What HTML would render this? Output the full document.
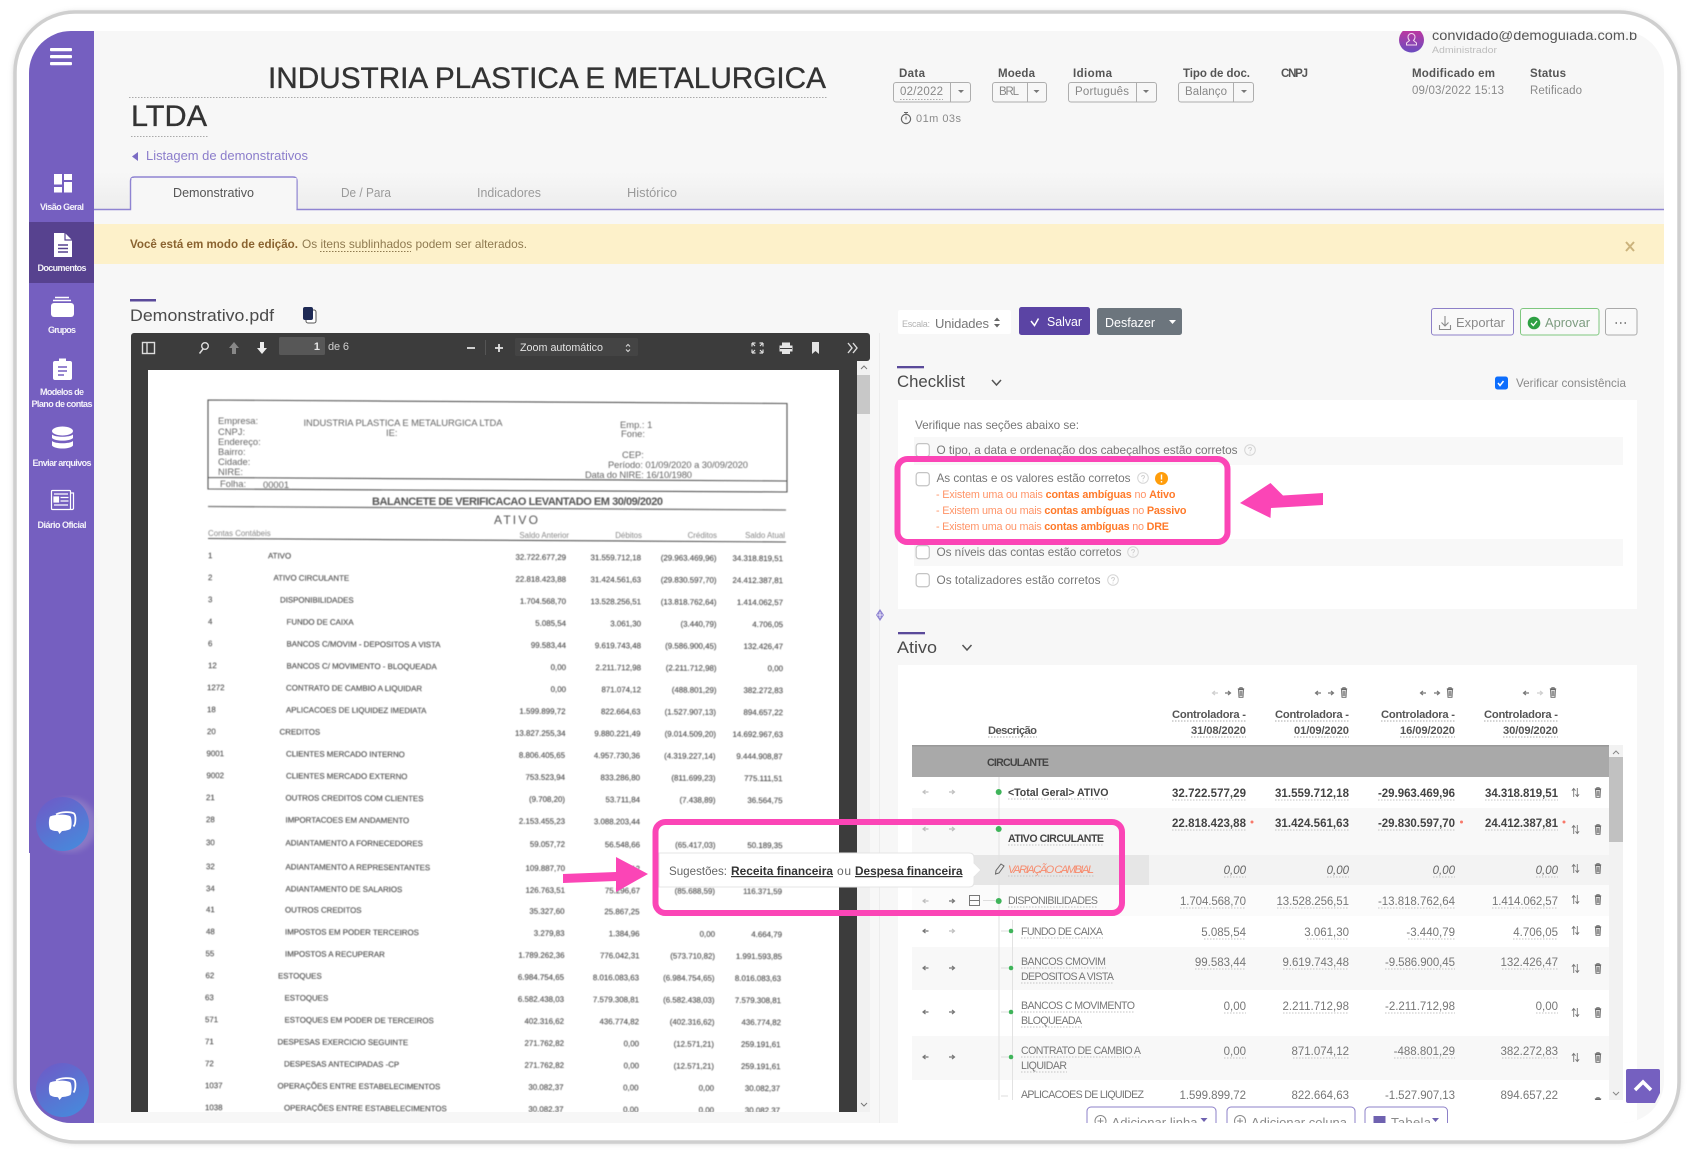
<!DOCTYPE html>
<html lang="pt"><head><meta charset="utf-8"><title>Demonstrativo</title>
<style>
html,body{margin:0;padding:0;background:#fff;width:1700px;height:1166px;overflow:hidden}
svg{display:block;filter:blur(.35px)}
text{font-family:"Liberation Sans",sans-serif;white-space:pre}
.s{fill:#fff;font-size:9px;font-weight:700;text-anchor:middle;opacity:.92}
.lb{font-size:11.5px;font-weight:700;fill:#555}
.v{font-size:11.5px;fill:#8a8a8a}
.sel{font-size:11.5px;fill:#888}
.c{font-size:11.8px;fill:#777}
.o{font-size:10.8px;fill:#ff9468}
.ob{font-weight:700;fill:#ff7a2a}
.h{font-size:11.2px;font-weight:700;fill:#555;text-anchor:end}
.nb{font-size:11.5px;font-weight:700;fill:#444;text-anchor:end}
.n{font-size:11.5px;fill:#777;text-anchor:end}
.ni{font-size:11.5px;fill:#666;font-style:italic;text-anchor:end}
.d{font-size:10.6px;fill:#777}
.db{font-size:10.6px;font-weight:700;fill:#444}
.p{font-size:7.9px;fill:#444;stroke:#666;stroke-width:.15}
.pn{font-size:7.9px;fill:#444;stroke:#666;stroke-width:.15;text-anchor:end}
.ph{font-size:9.4px;fill:#666}
.dot{stroke:#aaa;stroke-width:1;stroke-dasharray:1.5 1.5;fill:none}
.pk{fill:none;stroke:#fb45b6;stroke-width:6}
.btn{font-size:13px;fill:#8a8a8a}
</style></head><body>
<svg width="1700" height="1166" viewBox="0 0 1700 1166" xmlns="http://www.w3.org/2000/svg">
<defs>
<filter id="bl" x="-5%" y="-5%" width="110%" height="110%"><feGaussianBlur stdDeviation="3"/></filter>
<filter id="pb"><feGaussianBlur stdDeviation=".4"/></filter>
<clipPath id="scr"><rect x="29" y="31" width="1635" height="1092" rx="42"/></clipPath>
<clipPath id="em"><rect x="1400" y="31" width="237" height="40"/></clipPath>
<clipPath id="tb"><rect x="912" y="777" width="697" height="323"/></clipPath>
<clipPath id="bb"><rect x="1080" y="1100" width="400" height="23"/></clipPath>
<linearGradient id="ch" x1="0" y1="0" x2=".6" y2="1"><stop offset="0" stop-color="#7058c6"/><stop offset="1" stop-color="#4a86da"/></linearGradient>
<linearGradient id="av" x1="0" y1="0" x2="0" y2="1"><stop offset="0" stop-color="#c8359c"/><stop offset="1" stop-color="#6a4cc0"/></linearGradient>
<linearGradient id="tg" x1="0" y1="0" x2="0" y2="1"><stop offset="0" stop-color="#f7f7f7"/><stop offset="1" stop-color="#ededed"/></linearGradient>
<symbol id="tr" viewBox="0 0 10 14" overflow="visible"><path d="M1 2.500h8M3.500 2.500V1h3v1.500M2 3.500h6l-.5 9.500h-5zM4 5v6.500M6 5v6.500" fill="none" stroke="#666" stroke-width="1.200"/></symbol>
<symbol id="so" viewBox="0 0 10 12" overflow="visible"><path d="M3 11V2M1 4l2-2.500L5 4M7 1v9M5 8l2 2.500L9 8" fill="none" stroke="#777" stroke-width="1"/></symbol>
<symbol id="ra" viewBox="0 0 8 8" overflow="visible"><path d="M1 4h5M4 2l2.500 2L4 6" fill="none" stroke="#777" stroke-width="1.200"/></symbol>
<symbol id="la" viewBox="0 0 8 8" overflow="visible"><path d="M7 4H2M4 2L1.500 4 4 6" fill="none" stroke="#777" stroke-width="1.200"/></symbol>
<symbol id="cb" viewBox="0 0 16 16" overflow="visible"><rect x=".7" y=".7" width="14" height="14" rx="3" fill="#fff" stroke="#c4c4c4" stroke-width="1.300"/></symbol>
<symbol id="hp" viewBox="0 0 12 12" overflow="visible"><circle cx="6" cy="6" r="5.300" fill="none" stroke="#d5d5d5"/><path d="M4.500 4.800C4.600 3 7.500 3 7.500 4.800 7.500 6 6 6 6 7.300M6 8.500v1" fill="none" stroke="#d0d0d0"/></symbol>
<symbol id="bub" viewBox="0 0 30 26" overflow="visible"><path d="M9 3.500C14 .5 24 .5 27 2.500c2 2 2 10-.5 13" fill="none" stroke="#fff" stroke-width="1.800"/><path d="M3 5.500C9 3 20 3 23.500 5.500c1.500 3 1.500 10 0 12.500-3 1.500-7 2-8.500 2L12.500 23 11 20.200c-2.500 0-6-.5-8-2.200-1.500-3-1.500-9.500 0-12.500z" fill="#fff"/></symbol>
</defs>

<!-- frame -->
<rect x="14" y="12" width="1666" height="1131" rx="62" fill="#bbb" filter="url(#bl)" opacity=".7"/>
<rect x="15" y="12" width="1664" height="1130" rx="60" fill="#fff" stroke="#cfcfcf" stroke-width="3.500"/>

<g clip-path="url(#scr)">
<rect x="29" y="31" width="1635" height="1092" fill="#f7f7f7"/>
<!-- sidebar -->
<rect x="29" y="31" width="65" height="822" fill="#755fc0"/>
<rect x="30" y="853" width="64" height="270" fill="#755fc0"/>
<rect x="29" y="222" width="65" height="61" fill="#57428f"/>
<g fill="#fff">
<rect x="50" y="48" width="22" height="3.200" rx="1"/><rect x="50" y="55" width="22" height="3.200" rx="1"/><rect x="50" y="62" width="22" height="3.200" rx="1"/>
<rect x="54" y="174" width="8" height="10.500"/><rect x="64" y="174" width="8" height="6"/><rect x="64" y="182" width="8" height="10.500"/><rect x="54" y="187" width="8" height="5.500"/>
<path d="M54 233h11l7 7v17H54z"/>
<path d="M55 297.500h14M53 300.500h18" stroke="#fff" stroke-width="1.500" fill="none"/>
<rect x="51" y="303" width="23" height="14" rx="3"/>
<path d="M55 361h4v-2.500h7V361h4q2 0 2 2v15q0 2-2 2H55q-2 0-2-2v-15q0-2 2-2z"/>
<ellipse cx="62.500" cy="431" rx="10.500" ry="4.500"/>
<path d="M52 434.500c3 3 18 3 21 0V438c-3 3.500-18 3.500-21 0zM52 441c3 3 18 3 21 0v4.500c-3 4-18 4-21 0z"/>
</g>
<path d="M65 233v7h7" fill="none" stroke="#57428f" stroke-width="1.200"/>
<path d="M58 245h10M58 248.500h10M58 252h10" stroke="#57428f" stroke-width="1.500"/>
<path d="M58 367h9M58 371h9M58 375h6" stroke="#755fc0" stroke-width="1.500"/>
<g fill="none" stroke="#fff" stroke-width="1.200"><rect x="51.500" y="490.500" width="19" height="19" rx="1"/><path d="M71 493h2.500v15.500a1.500 1.500 0 0 1-1.500 1H70"/><path d="M54 494h14M60.500 497.500h8M60.500 501h8M54 505h14" /><rect x="54" y="497" width="4.500" height="5" fill="#fff"/></g>
<text class="s" x="62" y="210" textLength="44">Visão Geral</text>
<text class="s" x="62" y="271" textLength="49">Documentos</text>
<text class="s" x="62" y="333" textLength="28">Grupos</text>
<text class="s" x="62" y="395" textLength="44">Modelos de</text>
<text class="s" x="62" y="407" textLength="61">Plano de contas</text>
<text class="s" x="62" y="466" textLength="59">Enviar arquivos</text>
<text class="s" x="62" y="528" textLength="49">Diário Oficial</text>
<ellipse cx="70" cy="825" rx="27" ry="27" fill="#ddd" opacity=".2" filter="url(#bl)"/>
<ellipse cx="62.500" cy="824" rx="26.500" ry="27" fill="url(#ch)"/>
<use href="#bub" x="47" y="811" width="30" height="26"/>
<ellipse cx="62.500" cy="1090" rx="26.500" ry="27" fill="url(#ch)"/>
<use href="#bub" x="47" y="1077" width="30" height="26"/>

<!-- header -->
<text x="268" y="88" font-size="30" fill="#333" stroke="#333" stroke-width=".35" textLength="558" lengthAdjust="spacingAndGlyphs">INDUSTRIA PLASTICA E METALURGICA</text>
<path class="dot" d="M129 97.500H827"/>
<text x="131" y="126" font-size="30" fill="#333" stroke="#333" stroke-width=".35" textLength="76" lengthAdjust="spacingAndGlyphs">LTDA</text>
<path class="dot" d="M131 136.500H208"/>
<path d="M138 152v9l-6-4.500z" fill="#7b6cc4"/>
<text x="146" y="160" font-size="13" fill="#8b7dcb" textLength="162" lengthAdjust="spacingAndGlyphs">Listagem de demonstrativos</text>

<rect x="94" y="172" width="1570" height="37" fill="url(#tg)"/>
<path d="M94 209.500H130.500V181q0-4 4-4H293q4 0 4 4V209.500H1664" fill="none" stroke="#8f84d2" stroke-width="1.400"/>
<rect x="131.500" y="178" width="165" height="31.500" fill="#f7f7f7"/>
<text x="173" y="197" font-size="12.500" fill="#555" textLength="81" lengthAdjust="spacingAndGlyphs">Demonstrativo</text>
<text x="341" y="197" font-size="12.500" fill="#9a9a9a" textLength="50" lengthAdjust="spacingAndGlyphs">De / Para</text>
<text x="477" y="197" font-size="12.500" fill="#9a9a9a" textLength="64" lengthAdjust="spacingAndGlyphs">Indicadores</text>
<text x="627" y="197" font-size="12.500" fill="#9a9a9a" textLength="50" lengthAdjust="spacingAndGlyphs">Histórico</text>

<rect x="94" y="224" width="1570" height="40" fill="#fdf1ca"/>
<text x="130" y="248" font-size="12" font-weight="700" fill="#8a6330" textLength="168" lengthAdjust="spacingAndGlyphs">Você está em modo de edição.</text>
<text x="302" y="248" font-size="12" fill="#8f7a50" textLength="225" lengthAdjust="spacingAndGlyphs">Os itens sublinhados podem ser alterados.</text>
<path d="M320 251.500H411" stroke="#8f7a50" stroke-dasharray="1.500 1.500" fill="none"/>
<path d="M1626 242l8 9M1634 242l-8 9" stroke="#cbb37c" stroke-width="2"/>

<!-- top right -->
<circle cx="1411.500" cy="40" r="12.500" fill="url(#av)"/>
<path d="M1408 37a3.500 3.500 0 0 1 7 0c0 2-1 3-1.500 3.500l3 2.500v2h-10v-2l3-2.500c-.5-.5-1.500-1.500-1.500-3.500z" fill="none" stroke="#f3d7ee" stroke-width="1"/>
<g clip-path="url(#em)"><text x="1432" y="40" font-size="14" fill="#555" textLength="210" lengthAdjust="spacingAndGlyphs">convidado@demoguiada.com.br</text></g>
<text x="1432" y="53" font-size="9.500" fill="#bcbcbc" textLength="65" lengthAdjust="spacingAndGlyphs">Administrador</text>
<text class="lb" x="899" y="77" textLength="26">Data</text>
<text class="lb" x="998" y="77" textLength="37">Moeda</text>
<text class="lb" x="1073" y="77" textLength="39">Idioma</text>
<text class="lb" x="1183" y="77" textLength="67">Tipo de doc.</text>
<text class="lb" x="1281" y="77" textLength="27">CNPJ</text>
<text class="lb" x="1412" y="77" textLength="83">Modificado em</text>
<text class="lb" x="1530" y="77" textLength="36">Status</text>
<text class="v" x="1412" y="94" textLength="92">09/03/2022 15:13</text>
<text class="v" x="1530" y="94" textLength="52">Retificado</text>
<g fill="none" stroke="#aeaeae">
<rect x="893.500" y="82.500" width="77" height="19.500" rx="2.500"/><path d="M950.500 82v20"/>
<rect x="992.500" y="82.500" width="54" height="19.500" rx="2.500"/><path d="M1027.500 82v20"/>
<rect x="1068.500" y="82.500" width="88" height="19.500" rx="2.500"/><path d="M1136.500 82v20"/>
<rect x="1178.500" y="82.500" width="75" height="19.500" rx="2.500"/><path d="M1233.500 82v20"/>
</g>
<g fill="#777"><path d="M958 90h6l-3 3z"/><path d="M1033.500 90h6l-3 3z"/><path d="M1143 90h6l-3 3z"/><path d="M1241 90h6l-3 3z"/></g>
<text class="sel" x="900" y="95" textLength="43">02/2022</text>
<path class="dot" d="M900 99.500H943"/>
<text class="sel" x="999" y="95" textLength="20">BRL</text>
<text class="sel" x="1075" y="95" textLength="54">Português</text>
<text class="sel" x="1185" y="95" textLength="42">Balanço</text>
<circle cx="906" cy="119" r="4.600" fill="none" stroke="#666" stroke-width="1.200"/>
<path d="M904 112.500h4M906 113v2M906 116.500v3" stroke="#666" fill="none"/>
<text x="916" y="122" font-size="11" fill="#8a8a8a" textLength="45">01m 03s</text>

<!-- action row -->
<rect x="130" y="299" width="26" height="2.500" fill="#5a4a9a"/>
<text x="130" y="321" font-size="17" fill="#4b4b4b" textLength="144" lengthAdjust="spacingAndGlyphs">Demonstrativo.pdf</text>
<rect x="306" y="310" width="10" height="13" rx="2" fill="#fff" stroke="#555"/>
<rect x="303" y="307" width="10" height="13" rx="2" fill="#1e2a55"/>

<rect x="898" y="310" width="113" height="24" rx="2" fill="#fff"/>
<text x="902" y="327" font-size="9" fill="#b2b2b2" textLength="28">Escala:</text>
<text x="935" y="328" font-size="13" fill="#777" textLength="54">Unidades</text>
<path d="M994 321l3-3.500 3 3.500zM994 324l3 3.500 3-3.500z" fill="#666"/>
<rect x="1019" y="307" width="71" height="28" rx="2.500" fill="#5b44a4"/>
<path d="M1031 321l3.500 4.500 4-7" fill="none" stroke="#fff" stroke-width="1.500"/>
<text x="1047" y="326" font-size="13" fill="#fff" textLength="35" lengthAdjust="spacingAndGlyphs">Salvar</text>
<rect x="1097" y="308" width="85" height="27" rx="2.500" fill="#6c757d"/>
<text x="1105" y="327" font-size="13" fill="#fff" textLength="50" lengthAdjust="spacingAndGlyphs">Desfazer</text>
<path d="M1169 320h7l-3.500 4z" fill="#fff"/>
<rect x="1431.500" y="308.500" width="82" height="26.500" rx="2.500" fill="#f9f9f9" stroke="#8d80c8"/>
<path d="M1445 316v10M1441.500 322.500l3.500 3.500 3.500-3.500M1439.500 325v4.500h11V325" fill="none" stroke="#8a8a8a" stroke-width="1.100"/>
<text class="btn" x="1456" y="327" textLength="49" lengthAdjust="spacingAndGlyphs">Exportar</text>
<rect x="1520.500" y="308.500" width="78.500" height="26.500" rx="2.500" fill="#f9f9f9" stroke="#7fc77f"/>
<circle cx="1534" cy="323" r="6.300" fill="#2ea043"/><path d="M1531 323l2.300 2.500 3.700-4.500" fill="none" stroke="#fff" stroke-width="1.300"/>
<text class="btn" x="1545" y="327" textLength="45" lengthAdjust="spacingAndGlyphs" style="fill:#7d9c80">Aprovar</text>
<rect x="1605.500" y="308.500" width="31.500" height="26.500" rx="2.500" fill="#f9f9f9" stroke="#aaa"/>
<path d="M1615.500 323h1.500M1620 323h1.500M1624.500 323h1.500" stroke="#666" stroke-width="1.500"/>

<!-- checklist -->
<rect x="897" y="366" width="27" height="2.300" fill="#5a4a9a"/>
<text x="897" y="387" font-size="17" fill="#4b4b4b" textLength="68" lengthAdjust="spacingAndGlyphs">Checklist</text>
<path d="M992 380l4.500 5 4.500-5" fill="none" stroke="#555" stroke-width="1.500"/>
<rect x="1495" y="376.500" width="13" height="13" rx="2.500" fill="#0d6efd"/>
<path d="M1498 383l2 2.500 3.500-4.500" fill="none" stroke="#fff" stroke-width="1.500"/>
<text x="1516" y="387" font-size="12" fill="#8a8a8a" textLength="110" lengthAdjust="spacingAndGlyphs">Verificar consistência</text>

<rect x="898" y="400" width="739" height="209" fill="#fff"/>
<rect x="914" y="437" width="709" height="28" fill="#f8f8f8"/>
<rect x="914" y="539" width="709" height="27" fill="#f8f8f8"/>
<text class="c" x="915" y="429" textLength="164">Verifique nas seções abaixo se:</text>
<use href="#cb" x="915.500" y="443" width="15" height="15"/>
<text class="c" x="936.500" y="454" textLength="301">O tipo, a data e ordenação dos cabeçalhos estão corretos</text>
<use href="#hp" x="1244" y="444" width="12" height="12"/>
<use href="#cb" x="915.500" y="472" width="15" height="15"/>
<text class="c" x="936.500" y="482" textLength="194">As contas e os valores estão corretos</text>
<use href="#hp" x="1137" y="472" width="12" height="12"/>
<circle cx="1161.500" cy="478.500" r="6.500" fill="#ff9d0b"/><path d="M1161.500 474.500v5M1161.500 481v1.500" stroke="#fff" stroke-width="1.400"/>
<text class="o" x="936" y="498" textLength="239.500">- Existem uma ou mais <tspan class="ob">contas ambíguas</tspan> no <tspan class="ob">Ativo</tspan></text>
<text class="o" x="936" y="514" textLength="250.500">- Existem uma ou mais <tspan class="ob">contas ambíguas</tspan> no <tspan class="ob">Passivo</tspan></text>
<text class="o" x="936" y="530" textLength="233">- Existem uma ou mais <tspan class="ob">contas ambíguas</tspan> no <tspan class="ob">DRE</tspan></text>
<use href="#cb" x="915.500" y="545" width="15" height="15"/>
<text class="c" x="936.500" y="556" textLength="185">Os níveis das contas estão corretos</text>
<use href="#hp" x="1127" y="546" width="12" height="12"/>
<use href="#cb" x="915.500" y="573" width="15" height="15"/>
<text class="c" x="936.500" y="584" textLength="164">Os totalizadores estão corretos</text>
<use href="#hp" x="1107" y="574" width="12" height="12"/>
<rect class="pk" x="897.500" y="459" width="330" height="83" rx="10"/>
<path d="M1323 493l-40 2.500-12.500-12.500-30.500 20 30.500 15 .5-10 52-3z" fill="#fb45b6"/>

<path d="M879.500 333V1123" stroke="#ececec"/>
<path d="M884 615l-4-6-4 6 4 6z" fill="#8f84d2"/><path d="M877 615h6M880 612v6" stroke="#fff" stroke-width=".8"/>

<!-- ativo -->
<rect x="898" y="632" width="27" height="2.300" fill="#5a4a9a"/>
<text x="897" y="653" font-size="17" fill="#4b4b4b" textLength="40" lengthAdjust="spacingAndGlyphs">Ativo</text>
<path d="M962.500 645l4.500 5 4.500-5" fill="none" stroke="#555" stroke-width="1.500"/>
<rect x="898" y="665" width="739" height="458" fill="#fff"/>

<!-- table header -->
<g opacity=".35"><use href="#la" x="1211" y="689" width="8" height="8"/><use href="#ra" x="1536" y="689" width="8" height="8"/></g>
<use href="#ra" x="1224" y="689" width="8" height="8"/><use href="#tr" x="1237" y="686" width="8" height="13"/>
<use href="#la" x="1314" y="689" width="8" height="8"/><use href="#ra" x="1327" y="689" width="8" height="8"/><use href="#tr" x="1340" y="686" width="8" height="13"/>
<use href="#la" x="1419" y="689" width="8" height="8"/><use href="#ra" x="1433" y="689" width="8" height="8"/><use href="#tr" x="1446" y="686" width="8" height="13"/>
<use href="#la" x="1522" y="689" width="8" height="8"/><use href="#tr" x="1549" y="686" width="8" height="13"/>
<text class="h" x="1246" y="718" textLength="74">Controladora -</text><text class="h" x="1246" y="734" textLength="55">31/08/2020</text>
<text class="h" x="1349" y="718" textLength="74">Controladora -</text><text class="h" x="1349" y="734" textLength="55">01/09/2020</text>
<text class="h" x="1455" y="718" textLength="74">Controladora -</text><text class="h" x="1455" y="734" textLength="55">16/09/2020</text>
<text class="h" x="1558" y="718" textLength="74">Controladora -</text><text class="h" x="1558" y="734" textLength="55">30/09/2020</text>
<text class="h" x="1037" y="734" textLength="49">Descrição</text>
<path class="dot" d="M1172 721H1246M1191 737H1246M1275 721H1349M1294 737H1349M1381 721H1455M1400 737H1455M1484 721H1558M1503 737H1558M988 737H1037"/>
<rect x="912" y="745" width="697" height="32" fill="#a9a9a9"/>
<rect x="912" y="745" width="697" height="1.500" fill="#999"/>
<text class="db" x="987" y="766" textLength="62">CIRCULANTE</text>
<rect x="1609" y="745" width="14" height="355" fill="#f2f2f2"/>
<rect x="1609" y="757" width="14" height="85" fill="#c1c1c1"/>
<path d="M1613 754l3-3 3 3M1613 1092l3 3 3-3" fill="none" stroke="#888"/>

<g clip-path="url(#tb)">
<rect x="912" y="808" width="697" height="47" fill="#f8f8f8"/>
<rect x="912" y="855" width="697" height="30" fill="#f3f3f3"/>
<rect x="912" y="855" width="237" height="30" fill="#e6e6e6"/>
<rect x="912" y="885" width="697" height="31" fill="#fbfbfb"/>
<rect x="912" y="947" width="697" height="43" fill="#f8f8f8"/>
<rect x="912" y="1036" width="697" height="44" fill="#f8f8f8"/>
<path d="M999 777V1100" stroke="#e2e2e2"/>
<path d="M1012.500 920V1100" stroke="#e2e2e2"/>
<path d="M983 900.500h12M1001 931h7M1001 968h7M1001 1012h7M1001 1057h7M1001 1096h7" stroke="#ddd"/>
<g fill="#3fb45a"><circle cx="998.700" cy="792" r="3"/><circle cx="998.700" cy="829" r="3"/><circle cx="998.700" cy="901" r="3"/><circle cx="1011" cy="931" r="2.300"/><circle cx="1011" cy="968" r="2.300"/><circle cx="1011" cy="1012" r="2.300"/><circle cx="1011" cy="1057" r="2.300"/></g>
<text class="db" x="1008" y="796" textLength="100.500">&lt;Total Geral&gt; ATIVO</text>
<text class="nb" x="1246" y="797" textLength="74">32.722.577,29</text><text class="nb" x="1349" y="797" textLength="74">31.559.712,18</text><text class="nb" x="1455" y="797" textLength="77">-29.963.469,96</text><text class="nb" x="1558" y="797" textLength="73">34.318.819,51</text>
<text class="db" x="1008" y="842" textLength="96">ATIVO CIRCULANTE</text>
<text class="nb" x="1246" y="827" textLength="74">22.818.423,88</text><text class="nb" x="1349" y="827" textLength="74">31.424.561,63</text><text class="nb" x="1455" y="827" textLength="77">-29.830.597,70</text><text class="nb" x="1558" y="827" textLength="73">24.412.387,81</text>
<g fill="#f8786a"><circle cx="1252" cy="822" r="1.500"/><circle cx="1461.500" cy="822" r="1.500"/><circle cx="1564" cy="822" r="1.500"/></g>
<path d="M1001 864l3 2-5 7-3.500 1 .5-3.500z" fill="none" stroke="#666"/>
<text x="1008" y="873" font-size="11" font-style="italic" fill="#f78a6c" textLength="86">VARIAÇÃO CAMBIAL</text>
<text class="ni" x="1246" y="874">0,00</text><text class="ni" x="1349" y="874">0,00</text><text class="ni" x="1455" y="874">0,00</text><text class="ni" x="1558" y="874">0,00</text>
<rect x="969.500" y="895.500" width="10" height="10" fill="none" stroke="#777"/><path d="M970 900.500h9" stroke="#777"/>
<text class="d" x="1008" y="904" textLength="90">DISPONIBILIDADES</text>
<text class="n" x="1246" y="905" textLength="66">1.704.568,70</text><text class="n" x="1349" y="905" textLength="72.500">13.528.256,51</text><text class="n" x="1455" y="905" textLength="77">-13.818.762,64</text><text class="n" x="1558" y="905" textLength="66">1.414.062,57</text>
<text class="d" x="1021" y="935" textLength="82">FUNDO DE CAIXA</text>
<text class="n" x="1246" y="936">5.085,54</text><text class="n" x="1349" y="936">3.061,30</text><text class="n" x="1455" y="936">-3.440,79</text><text class="n" x="1558" y="936">4.706,05</text>
<text class="d" x="1021" y="965" textLength="85">BANCOS CMOVIM</text><text class="d" x="1021" y="980" textLength="93">DEPOSITOS A VISTA</text>
<text class="n" x="1246" y="966">99.583,44</text><text class="n" x="1349" y="966" textLength="66.500">9.619.743,48</text><text class="n" x="1455" y="966" textLength="70">-9.586.900,45</text><text class="n" x="1558" y="966">132.426,47</text>
<text class="d" x="1021" y="1009" textLength="114">BANCOS C MOVIMENTO</text><text class="d" x="1021" y="1024" textLength="61">BLOQUEADA</text>
<text class="n" x="1246" y="1010">0,00</text><text class="n" x="1349" y="1010" textLength="66.500">2.211.712,98</text><text class="n" x="1455" y="1010" textLength="70">-2.211.712,98</text><text class="n" x="1558" y="1010">0,00</text>
<text class="d" x="1021" y="1054" textLength="120">CONTRATO DE CAMBIO A</text><text class="d" x="1021" y="1069" textLength="46">LIQUIDAR</text>
<text class="n" x="1246" y="1055">0,00</text><text class="n" x="1349" y="1055">871.074,12</text><text class="n" x="1455" y="1055">-488.801,29</text><text class="n" x="1558" y="1055">382.272,83</text>
<text class="d" x="1021" y="1098" textLength="123">APLICACOES DE LIQUIDEZ</text>
<text class="n" x="1246" y="1099" textLength="66.500">1.599.899,72</text><text class="n" x="1349" y="1099">822.664,63</text><text class="n" x="1455" y="1099" textLength="70">-1.527.907,13</text><text class="n" x="1558" y="1099">894.657,22</text>
<!-- dotted underlines -->
<path class="dot" d="M1008 799H1108M1172 800H1246M1275 800H1349M1378 800H1455M1485 800H1558M1008 845H1104M1172 830H1246M1275 830H1349M1378 830H1455M1485 830H1558M1008 876H1094M1224 877H1246M1327 877H1349M1433 877H1455M1536 877H1558M1008 907H1098M1180 908H1246M1277 908H1349M1378 908H1455M1492 908H1558M1021 938H1103M1204 939H1246M1307 939H1349M1408 939H1455M1513 939H1558M1021 968H1106M1021 983H1114M1195 969H1246M1283 969H1349M1385 969H1455M1502 969H1558M1021 1012H1135M1021 1027H1082M1224 1013H1246M1283 1013H1349M1385 1013H1455M1536 1013H1558M1021 1057H1141M1021 1072H1067M1224 1058H1246M1293 1058H1349M1394 1058H1455M1502 1058H1558" style="stroke:#c4c4c4"/>
<!-- row controls -->
<g opacity=".45"><use href="#la" x="921.500" y="788" width="8" height="8"/><use href="#ra" x="948" y="788" width="8" height="8"/><use href="#la" x="921.500" y="825" width="8" height="8"/><use href="#ra" x="948" y="825" width="8" height="8"/><use href="#la" x="921.500" y="897" width="8" height="8"/><use href="#ra" x="948" y="927" width="8" height="8"/></g>
<use href="#ra" x="948" y="897" width="8" height="8"/>
<use href="#la" x="921.500" y="927" width="8" height="8"/>
<use href="#la" x="921.500" y="964" width="8" height="8"/><use href="#ra" x="948" y="964" width="8" height="8"/>
<use href="#la" x="921.500" y="1008" width="8" height="8"/><use href="#ra" x="948" y="1008" width="8" height="8"/>
<use href="#la" x="921.500" y="1053" width="8" height="8"/><use href="#ra" x="948" y="1053" width="8" height="8"/>
<use href="#so" x="1571" y="787" width="9" height="11"/><use href="#tr" x="1594" y="786" width="8" height="13"/>
<use href="#so" x="1571" y="824" width="9" height="11"/><use href="#tr" x="1594" y="823" width="8" height="13"/>
<use href="#so" x="1571" y="863" width="9" height="11"/><use href="#tr" x="1594" y="862" width="8" height="13"/>
<use href="#so" x="1571" y="894" width="9" height="11"/><use href="#tr" x="1594" y="893" width="8" height="13"/>
<use href="#so" x="1571" y="925" width="9" height="11"/><use href="#tr" x="1594" y="924" width="8" height="13"/>
<use href="#so" x="1571" y="963" width="9" height="11"/><use href="#tr" x="1594" y="962" width="8" height="13"/>
<use href="#so" x="1571" y="1007" width="9" height="11"/><use href="#tr" x="1594" y="1006" width="8" height="13"/>
<use href="#so" x="1571" y="1052" width="9" height="11"/><use href="#tr" x="1594" y="1051" width="8" height="13"/>
<use href="#tr" x="1594" y="1096" width="8" height="13"/>
</g>

<!-- bottom buttons -->
<g clip-path="url(#bb)">
<rect x="1087" y="1107" width="129" height="30" rx="4" fill="#fff" stroke="#8d80c8"/>
<rect x="1227" y="1107" width="128" height="30" rx="4" fill="#fff" stroke="#8d80c8"/>
<rect x="1365" y="1107" width="82.500" height="30" rx="4" fill="#fff" stroke="#8d80c8"/>
<circle cx="1100.500" cy="1121" r="5.500" fill="none" stroke="#8a8a8a"/><path d="M1100.500 1118v6M1097.500 1121h6" stroke="#8a8a8a"/>
<circle cx="1240" cy="1121" r="5.500" fill="none" stroke="#8a8a8a"/><path d="M1240 1118v6M1237 1121h6" stroke="#8a8a8a"/>
<rect x="1373.500" y="1116" width="12" height="10" fill="#6f62b0"/>
<text class="btn" x="1111.500" y="1127" textLength="86">Adicionar linha</text>
<path d="M1200.500 1118h7l-3.500 4z" fill="#6f62b0"/>
<text class="btn" x="1251" y="1127" textLength="96">Adicionar coluna</text>
<text class="btn" x="1391" y="1127" textLength="40">Tabela</text>
<path d="M1432 1118h7l-3.500 4z" fill="#6f62b0"/>
</g>

<!-- pdf viewer -->
<rect x="131" y="333" width="739" height="28" rx="3" fill="#3c3c3c"/>
<rect x="131" y="355" width="726" height="757" fill="#3c3c3c"/>
<rect x="857" y="361" width="13" height="751" fill="#f1f1f1"/>
<rect x="857" y="375" width="13" height="39" fill="#c8c8c8"/>
<path d="M861 369l3-3 3 3M861 1103l3 3 3-3" fill="none" stroke="#777"/>
<rect x="148" y="370" width="691" height="750" fill="#fff"/>
<rect x="142.500" y="342.500" width="12" height="11" fill="none" stroke="#ddd" stroke-width="1.400"/><path d="M147 343v10" stroke="#ddd" stroke-width="1.400"/>
<circle cx="205" cy="346" r="3.300" fill="none" stroke="#ddd" stroke-width="1.400"/><path d="M203 349l-3.500 4.500" stroke="#ddd" stroke-width="1.500"/>
<path d="M234 342l5 6h-3v6h-4v-6h-3z" fill="#888"/>
<path d="M262 354l5-6h-3v-6h-4v6h-3z" fill="#eee"/>
<rect x="279" y="337" width="46" height="18" rx="1.500" fill="#575757"/>
<text x="320" y="350" font-size="11" font-weight="700" fill="#e6e6e6" text-anchor="end">1</text>
<text x="328" y="350" font-size="11" fill="#cfcfcf" textLength="21">de 6</text>
<path d="M467 348h8M495 348h8M499 344v8" stroke="#e4e4e4" stroke-width="1.800"/>
<path d="M485.500 340v15" stroke="#555"/>
<rect x="515" y="338" width="123" height="18" rx="1.500" fill="#444"/>
<text x="520" y="351" font-size="11" fill="#e4e4e4" textLength="83" lengthAdjust="spacingAndGlyphs">Zoom automático</text>
<path d="M626 346.500l2-2 2 2M626 349.500l2 2 2-2" stroke="#ddd" fill="none"/>
<path d="M752 343h3.500M752 343v3.500M763 343h-3.500M763 343v3.500M752 353v-3.500M752 353h3.500M763 353h-3.500M763 353v-3.500M752 343l3 3M763 343l-3 3M752 353l3-3M763 353l-3-3" stroke="#ddd" stroke-width="1.200" fill="none"/>
<path d="M782 342.500h8v3h2.500v6h-2.500v2.500h-8v-2.500h-2.500v-6h2.500z" fill="#e4e4e4"/><path d="M780 348.500h12" stroke="#3c3c3c"/>
<path d="M812 342h7v12l-3.500-3-3.500 3z" fill="#e4e4e4"/>
<path d="M848 343l4 5-4 5M853 343l4 5-4 5" fill="none" stroke="#ddd" stroke-width="1.400"/>

<!-- pdf page -->
<g filter="url(#pb)">
<path d="M208 400L787 403.500V492L208 489zM208 477.500L787 481" fill="none" stroke="#555" stroke-width="1.100"/>
<path d="M208 506.500L786 510" fill="none" stroke="#555" stroke-width="1.300" opacity=".8"/>
<path d="M208 538.500L786 542" fill="none" stroke="#555" stroke-width="1.100"/>
<text class="ph" x="218" y="424">Empresa:</text><text class="ph" x="218" y="435">CNPJ:</text><text class="ph" x="218" y="445">Endereço:</text><text class="ph" x="218" y="455">Bairro:</text><text class="ph" x="218" y="465">Cidade:</text><text class="ph" x="218" y="475">NIRE:</text>
<text class="ph" x="303.500" y="426" textLength="199">INDUSTRIA PLASTICA E METALURGICA LTDA</text><text class="ph" x="386" y="436">IE:</text>
<text class="ph" x="620" y="428">Emp.: 1</text><text class="ph" x="621" y="437">Fone:</text><text class="ph" x="622" y="458">CEP:</text>
<text class="ph" x="608" y="468" textLength="140">Período: 01/09/2020 a 30/09/2020</text><text class="ph" x="585" y="478" textLength="107">Data do NIRE: 16/10/1980</text>
<text class="ph" x="220" y="487">Folha:</text><text class="ph" x="263" y="488">00001</text>
<text x="372" y="505" font-size="11" font-weight="700" fill="#555" textLength="291">BALANCETE DE VERIFICACAO LEVANTADO EM 30/09/2020</text>
<text x="516" y="524" font-size="12" fill="#555" text-anchor="middle" textLength="44">A T I V O</text>
<text class="p" x="208" y="536" style="fill:#888;stroke:none">Contas Contábeis</text>
<text class="pn" x="569" y="538" style="fill:#888;stroke:none">Saldo Anterior</text><text class="pn" x="642" y="538" style="fill:#888;stroke:none">Débitos</text><text class="pn" x="717" y="538" style="fill:#888;stroke:none">Créditos</text><text class="pn" x="785" y="538" style="fill:#888;stroke:none">Saldo Atual</text>

<g transform="translate(0 -1) skewY(.3)">
<g transform="translate(0 558)"><text class="p" x="208">1</text><text class="p" x="268">ATIVO</text><text class="pn" x="566">32.722.677,29</text><text class="pn" x="641">31.559.712,18</text><text class="pn" x="716.500">(29.963.469,96)</text><text class="pn" x="783">34.318.819,51</text></g>
<g transform="translate(0 580)"><text class="p" x="208">2</text><text class="p" x="273.500">ATIVO CIRCULANTE</text><text class="pn" x="566">22.818.423,88</text><text class="pn" x="641">31.424.561,63</text><text class="pn" x="716.500">(29.830.597,70)</text><text class="pn" x="783">24.412.387,81</text></g>
<g transform="translate(0 602)"><text class="p" x="208">3</text><text class="p" x="280">DISPONIBILIDADES</text><text class="pn" x="566">1.704.568,70</text><text class="pn" x="641">13.528.256,51</text><text class="pn" x="716.500">(13.818.762,64)</text><text class="pn" x="783">1.414.062,57</text></g>
<g transform="translate(0 624)"><text class="p" x="208">4</text><text class="p" x="286.500">FUNDO DE CAIXA</text><text class="pn" x="566">5.085,54</text><text class="pn" x="641">3.061,30</text><text class="pn" x="716.500">(3.440,79)</text><text class="pn" x="783">4.706,05</text></g>
<g transform="translate(0 646)"><text class="p" x="208">6</text><text class="p" x="286.500">BANCOS C/MOVIM - DEPOSITOS A VISTA</text><text class="pn" x="566">99.583,44</text><text class="pn" x="641">9.619.743,48</text><text class="pn" x="716.500">(9.586.900,45)</text><text class="pn" x="783">132.426,47</text></g>
<g transform="translate(0 668)"><text class="p" x="208">12</text><text class="p" x="286.500">BANCOS C/ MOVIMENTO - BLOQUEADA</text><text class="pn" x="566">0,00</text><text class="pn" x="641">2.211.712,98</text><text class="pn" x="716.500">(2.211.712,98)</text><text class="pn" x="783">0,00</text></g>
<g transform="translate(0 690)"><text class="p" x="207">1272</text><text class="p" x="286">CONTRATO DE CAMBIO A LIQUIDAR</text><text class="pn" x="566">0,00</text><text class="pn" x="641">871.074,12</text><text class="pn" x="716.500">(488.801,29)</text><text class="pn" x="783">382.272,83</text></g>
<g transform="translate(0 712)"><text class="p" x="207">18</text><text class="p" x="286">APLICACOES DE LIQUIDEZ IMEDIATA</text><text class="pn" x="565.500">1.599.899,72</text><text class="pn" x="640.500">822.664,63</text><text class="pn" x="716">(1.527.907,13)</text><text class="pn" x="783">894.657,22</text></g>
<g transform="translate(0 734)"><text class="p" x="207">20</text><text class="p" x="279.500">CREDITOS</text><text class="pn" x="565.500">13.827.255,34</text><text class="pn" x="640.500">9.880.221,49</text><text class="pn" x="716">(9.014.509,20)</text><text class="pn" x="783">14.692.967,63</text></g>
<g transform="translate(0 756)"><text class="p" x="206.500">9001</text><text class="p" x="286">CLIENTES MERCADO INTERNO</text><text class="pn" x="565">8.806.405,65</text><text class="pn" x="640">4.957.730,36</text><text class="pn" x="715.500">(4.319.227,14)</text><text class="pn" x="782.500">9.444.908,87</text></g>
<g transform="translate(0 778)"><text class="p" x="206.500">9002</text><text class="p" x="286">CLIENTES MERCADO EXTERNO</text><text class="pn" x="565">753.523,94</text><text class="pn" x="640">833.286,80</text><text class="pn" x="715.500">(811.699,23)</text><text class="pn" x="782.500">775.111,51</text></g>
<g transform="translate(0 800)"><text class="p" x="206">21</text><text class="p" x="285.500">OUTROS CREDITOS COM CLIENTES</text><text class="pn" x="565">(9.708,20)</text><text class="pn" x="640">53.711,84</text><text class="pn" x="715.500">(7.438,89)</text><text class="pn" x="782.500">36.564,75</text></g>
<g transform="translate(0 822)"><text class="p" x="206">28</text><text class="p" x="285.500">IMPORTACOES EM ANDAMENTO</text><text class="pn" x="565">2.153.455,23</text><text class="pn" x="640">3.088.203,44</text></g>
<g transform="translate(0 845)"><text class="p" x="206">30</text><text class="p" x="285.500">ADIANTAMENTO A FORNECEDORES</text><text class="pn" x="565">59.057,72</text><text class="pn" x="640">56.548,66</text><text class="pn" x="715.500">(65.417,03)</text><text class="pn" x="782.500">50.189,35</text></g>
<g transform="translate(0 869)"><text class="p" x="206">32</text><text class="p" x="285.500">ADIANTAMENTO A REPRESENTANTES</text><text class="pn" x="565">109.887,70</text><text class="pn" x="640">12</text></g>
<g transform="translate(0 891)"><text class="p" x="206">34</text><text class="p" x="285.500">ADIANTAMENTO DE SALARIOS</text><text class="pn" x="565">126.763,51</text><text class="pn" x="640">75.296,67</text><text class="pn" x="715">(85.688,59)</text><text class="pn" x="782">116.371,59</text></g>
<g transform="translate(0 912)"><text class="p" x="206">41</text><text class="p" x="285">OUTROS CREDITOS</text><text class="pn" x="564.500">35.327,60</text><text class="pn" x="639.500">25.867,25</text></g>
<g transform="translate(0 934)"><text class="p" x="206">48</text><text class="p" x="285">IMPOSTOS EM PODER TERCEIROS</text><text class="pn" x="564.500">3.279,83</text><text class="pn" x="639.500">1.384,96</text><text class="pn" x="715">0,00</text><text class="pn" x="782">4.664,79</text></g>
<g transform="translate(0 956)"><text class="p" x="205.500">55</text><text class="p" x="285">IMPOSTOS A RECUPERAR</text><text class="pn" x="564.500">1.789.262,36</text><text class="pn" x="639.500">776.042,31</text><text class="pn" x="715">(573.710,82)</text><text class="pn" x="782">1.991.593,85</text></g>
<g transform="translate(0 978)"><text class="p" x="205.500">62</text><text class="p" x="278">ESTOQUES</text><text class="pn" x="564">6.984.754,65</text><text class="pn" x="639">8.016.083,63</text><text class="pn" x="714.500">(6.984.754,65)</text><text class="pn" x="781">8.016.083,63</text></g>
<g transform="translate(0 1000)"><text class="p" x="205">63</text><text class="p" x="284.500">ESTOQUES</text><text class="pn" x="564">6.582.438,03</text><text class="pn" x="639">7.579.308,81</text><text class="pn" x="714.500">(6.582.438,03)</text><text class="pn" x="781">7.579.308,81</text></g>
<g transform="translate(0 1022)"><text class="p" x="205">571</text><text class="p" x="284.500">ESTOQUES EM PODER DE TERCEIROS</text><text class="pn" x="564">402.316,62</text><text class="pn" x="639">436.774,82</text><text class="pn" x="714.500">(402.316,62)</text><text class="pn" x="781">436.774,82</text></g>
<g transform="translate(0 1044)"><text class="p" x="205">71</text><text class="p" x="277.500">DESPESAS EXERCICIO SEGUINTE</text><text class="pn" x="564">271.762,82</text><text class="pn" x="639">0,00</text><text class="pn" x="714">(12.571,21)</text><text class="pn" x="780.500">259.191,61</text></g>
<g transform="translate(0 1066)"><text class="p" x="205">72</text><text class="p" x="284">DESPESAS ANTECIPADAS -CP</text><text class="pn" x="564">271.762,82</text><text class="pn" x="639">0,00</text><text class="pn" x="714">(12.571,21)</text><text class="pn" x="780.500">259.191,61</text></g>
<g transform="translate(0 1088)"><text class="p" x="205">1037</text><text class="p" x="277.500">OPERAÇÕES ENTRE ESTABELECIMENTOS</text><text class="pn" x="563.500">30.082,37</text><text class="pn" x="638.500">0,00</text><text class="pn" x="714">0,00</text><text class="pn" x="780">30.082,37</text></g>
<g transform="translate(0 1110)"><text class="p" x="205">1038</text><text class="p" x="284">OPERAÇÕES ENTRE ESTABELECIMENTOS</text><text class="pn" x="563.500">30.082,37</text><text class="pn" x="638.500">0,00</text><text class="pn" x="714">0,00</text><text class="pn" x="780">30.082,37</text></g>
</g>
</g>
<rect x="131" y="1112" width="739" height="11" fill="#f7f7f7"/>

<!-- tooltip and highlight -->
<path d="M659 853H969q5 0 5 5V863l7 7-7 7V882q0 5-5 5H659z" fill="#fff" stroke="#e4e4e4"/>
<text x="669" y="875" font-size="12" fill="#666" textLength="58" lengthAdjust="spacingAndGlyphs">Sugestões:</text>
<text x="731" y="875" font-size="12" font-weight="700" fill="#333" text-decoration="underline" textLength="102" lengthAdjust="spacingAndGlyphs">Receita financeira</text>
<text x="837" y="875" font-size="12" fill="#666" textLength="14">ou</text>
<text x="855" y="875" font-size="12" font-weight="700" fill="#333" text-decoration="underline" textLength="107.500" lengthAdjust="spacingAndGlyphs">Despesa financeira</text>
<rect class="pk" x="655.500" y="822" width="466.500" height="91" rx="10"/>
<path d="M563 874l53-2V857l32 17-32 18v-11l-53 2z" fill="#fb45b6"/>

<!-- scroll top -->
<path d="M1628 1069h30q2 0 2 2v22l-5 10h-27q-2 0-2-2v-30q0-2 2-2z" fill="#7560c0"/>
<path d="M1635 1090l8-8 8 8" fill="none" stroke="#fff" stroke-width="3.500"/>
</g>
</svg>
</body></html>
